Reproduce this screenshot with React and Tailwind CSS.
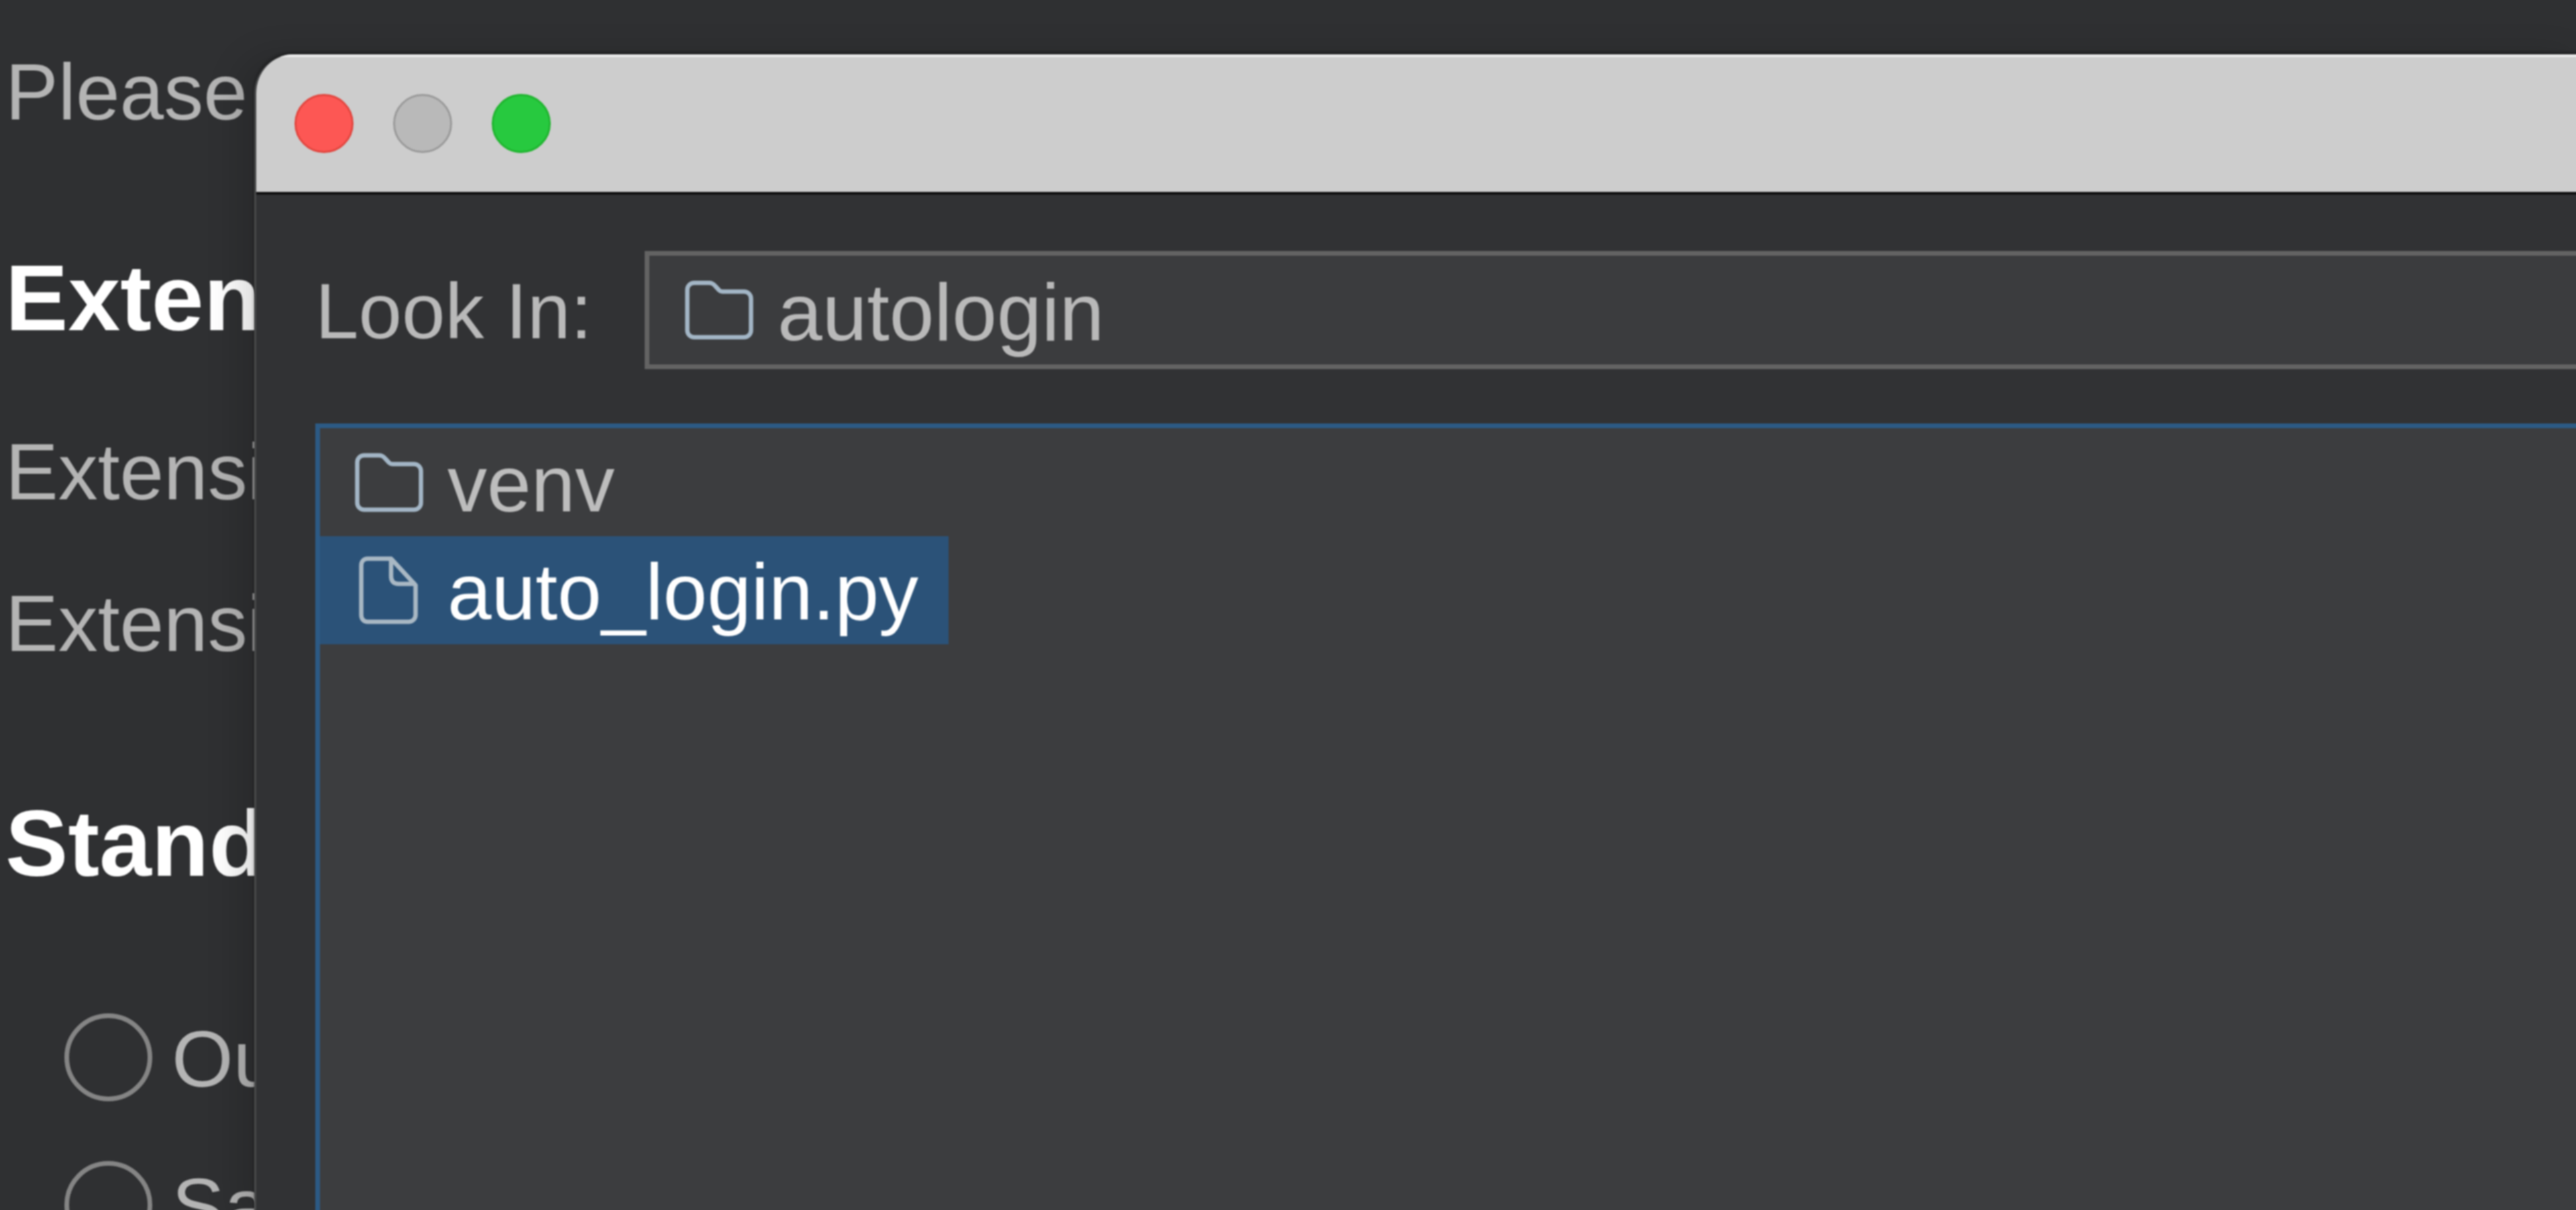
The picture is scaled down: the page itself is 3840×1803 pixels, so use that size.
import React from 'react';

function FolderIcon({ className }) {
  return (
    <svg viewBox="0 0 102 88" className={className} fill="none" stroke="#a3b6c6" strokeWidth="6.5" strokeLinejoin="round">
      <path d="M14 3.5H36C40 3.5 42.5 5 45 8L51 14.5C52.5 16 54 16.5 56 16.5H88C94 16.5 98.5 21 98.5 27V74C98.5 80 94 84.5 88 84.5H14C8 84.5 3.5 80 3.5 74V14C3.5 8 8 3.5 14 3.5Z" />
    </svg>
  );
}

function FileIcon({ className }) {
  return (
    <svg viewBox="0 0 88 101" className={className} fill="none" stroke="#a9b8c4" strokeWidth="6.5" strokeLinejoin="round">
      <path d="M13 3.5H48L84.5 43V87C84.5 93 80 97.5 74 97.5H13C7 97.5 3.5 93 3.5 87V14C3.5 8 7 3.5 13 3.5Z" />
      <path d="M48 3.5V30C48 37 52 41 59 41H84.5" />
    </svg>
  );
}

function RadioRow({ label }) {
  return (
    <div className="flex items-center gap-[29px] pl-[88px] h-[161px] text-[118px] leading-[161px] text-[#b4b4b4]">
      <span className="shrink-0 w-[131px] h-[131px] rounded-full border-[7px] border-[#858585]" />
      <span className="mt-[5px]">{label}</span>
    </div>
  );
}

export default function App() {
  return (
    <div className="relative h-screen overflow-hidden bg-[#2f3032] font-['Liberation_Sans',Arial,sans-serif] whitespace-nowrap">
      {/* behind the dialog */}
      <div className="flex flex-col pl-[8px] pt-[57px] blur-[1px]">
        <div className="h-[161px] text-[118px] leading-[161px] text-[#b4b4b4]">Please select an extension</div>
        <div className="mt-[141px] h-[170px] text-[140px] leading-[170px] font-bold text-white">Extension details</div>
        <div className="mt-[94px] h-[161px] text-[118px] leading-[161px] text-[#b4b4b4]">Extension type:</div>
        <div className="mt-[65px] h-[161px] text-[118px] leading-[161px] text-[#b4b4b4]">Extension file (.py):</div>
        <div className="mt-[162px] h-[170px] text-[140px] leading-[170px] font-bold text-white">Standard Output</div>
        <div className="mt-[153px] flex flex-col gap-[59px]">
          <RadioRow label="Output to system console" />
          <RadioRow label="Save to file:" />
        </div>
      </div>

      {/* file dialog */}
      <div className="absolute left-[379px] top-[81px] -right-[12px] -bottom-[12px] flex flex-col bg-[#313234] rounded-tl-[58px] border-l-[3px] border-[#48494a] shadow-[-24px_0_50px_rgba(0,0,0,0.14),0_-3px_5px_rgba(0,0,0,0.35)] overflow-hidden blur-[1px]">
        <div className="shrink-0 h-[209px] flex items-center gap-[59px] pl-[57px] pb-[4px] bg-[#cdcdcd] border-t-[4px] border-t-[#ececec] border-b-[4px] border-b-[#0e0e0f]">
          <span className="w-[88px] h-[88px] rounded-full bg-[#fd5754] border-[3px] border-[#e2463f]" />
          <span className="w-[88px] h-[88px] rounded-full bg-[#b9b9b9] border-[3px] border-[#9a9a9a]" />
          <span className="w-[88px] h-[88px] rounded-full bg-[#27c93f] border-[3px] border-[#1fb52f]" />
        </div>

        <div className="flex-1 flex flex-col pt-[84px] pl-[88px] min-h-0">
          <div className="flex items-center">
            <div className="w-[491px] pt-[4px] text-[116px] leading-[172px] text-[#b9b9b9]">Look In:</div>
            <div className="flex-1 h-[176px] -mr-[20px] flex items-center pl-[53px] gap-[36px] bg-[#3b3c3e] border-[7px] border-[#636363] text-[120px] text-[#b9b9b9]">
              <FolderIcon className="shrink-0 w-[102px] h-[88px]" />
              <span className="mt-[5px]">autologin</span>
            </div>
          </div>

          <div className="flex-1 mt-[81px] -mr-[20px] -mb-[20px] bg-[#3c3d3f] border-[7px] border-[#2c5a85] text-[118px] leading-[161px]">
            <div className="flex items-center h-[161px] pl-[52px] gap-[36px] text-[#bdbdbd]">
              <FolderIcon className="shrink-0 w-[102px] h-[88px]" />
              <span className="mt-[5px]">venv</span>
            </div>
            <div className="flex items-center w-[937px] h-[161px] pl-[58px] gap-[44px] bg-[#2b5278] text-white">
              <FileIcon className="shrink-0 w-[88px] h-[101px]" />
              <span className="mt-[6px]">auto_login.py</span>
            </div>
          </div>
        </div>
      </div>
    </div>
  );
}
